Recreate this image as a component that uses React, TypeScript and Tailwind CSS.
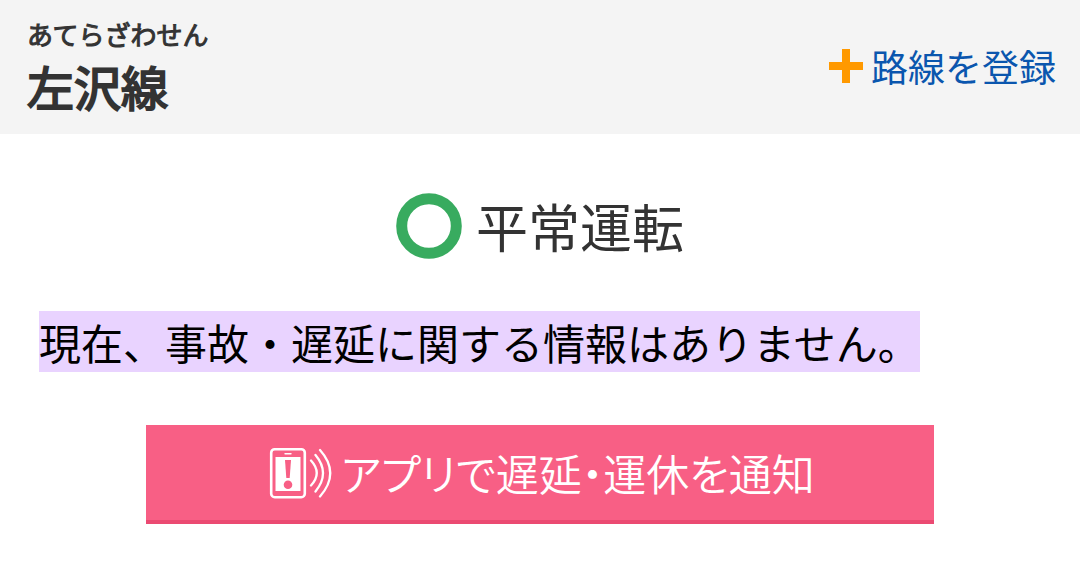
function PlusIcon() {
  return (
    <svg viewBox="0 0 34 34" className="size-[34px] shrink-0" aria-hidden="true">
      <path d="M13 0h8v13h13v8H21v13h-8V21H0v-8h13z" fill="#ff9900" />
    </svg>
  );
}

function NormalIcon() {
  return (
    <svg viewBox="0 0 66 66" className="size-[66px] shrink-0" aria-hidden="true">
      <circle cx="33" cy="33" r="27.3" fill="none" stroke="#38ab5f" strokeWidth="11" />
    </svg>
  );
}

function AlertPhoneIcon() {
  return (
    <svg viewBox="0 0 64 52" className="h-[52px] w-16 shrink-0" fill="none" stroke="#fff" aria-hidden="true">
      <rect x="2.2" y="2.2" width="33.6" height="48" rx="3.5" strokeWidth="2.6" />
      <path d="M16 6.8h6" strokeWidth="1.4" strokeLinecap="round" />
      <path d="M6.5 10h25v34h-25z" fill="#fff" stroke="none" />
      <path d="M16 13h6l-1.3 18h-3.4z" fill="#f85f85" stroke="none" />
      <circle cx="19" cy="37.8" r="4.3" fill="#f85f85" stroke="none" />
      <path d="M42 13.5Q53.5 26 42 38.5M46.5 8Q61.5 26 46.5 44.5M51 3Q71.5 26 51 49.5" strokeWidth="2.3" strokeLinecap="round" />
    </svg>
  );
}

export default function App() {
  return (
    <div className="bg-white font-['Noto_Sans_CJK_JP','Noto_Sans',sans-serif] text-[#333]">
      <header className="flex items-start justify-between bg-[#f4f4f4] pt-[14px] pr-6 pb-4 pl-[27px]">
        <h1 className="flex flex-col font-normal">
          <span className="text-[26px] leading-10 [-webkit-text-stroke:1px_#333]">あてらざわせん</span>
          <span className="text-[47px] leading-16 [-webkit-text-stroke:2px_#333]">左沢線</span>
        </h1>
        <a href="#register" className="mt-5 flex items-center gap-2 text-[37px] leading-16 text-[#0a56ae]">
          <PlusIcon />
          路線を登録
        </a>
      </header>
      <main className="px-[39px] pt-14">
        <h2 className="flex items-center justify-center gap-[14px] text-[52px] leading-[72px] font-normal">
          <NormalIcon />
          平常運転
        </h2>
        <p className="mt-[49px] text-[42px] leading-[61px] text-black">
          <mark className="bg-[#e9d3ff] text-black">現在、事故・遅延に関する情報はありません。</mark>
        </p>
        <div className="mt-[53px] flex justify-center pb-12">
          <a
            href="#notify"
            className="flex h-[99px] w-full max-w-[788px] items-center justify-center gap-2 border-b-4 border-[#eb4a72] bg-[#f85f85] pl-1 text-[43px] font-[350] text-white [font-feature-settings:'palt']"
          >
            <AlertPhoneIcon />
            アプリで遅延・運休を通知
          </a>
        </div>
      </main>
    </div>
  );
}
